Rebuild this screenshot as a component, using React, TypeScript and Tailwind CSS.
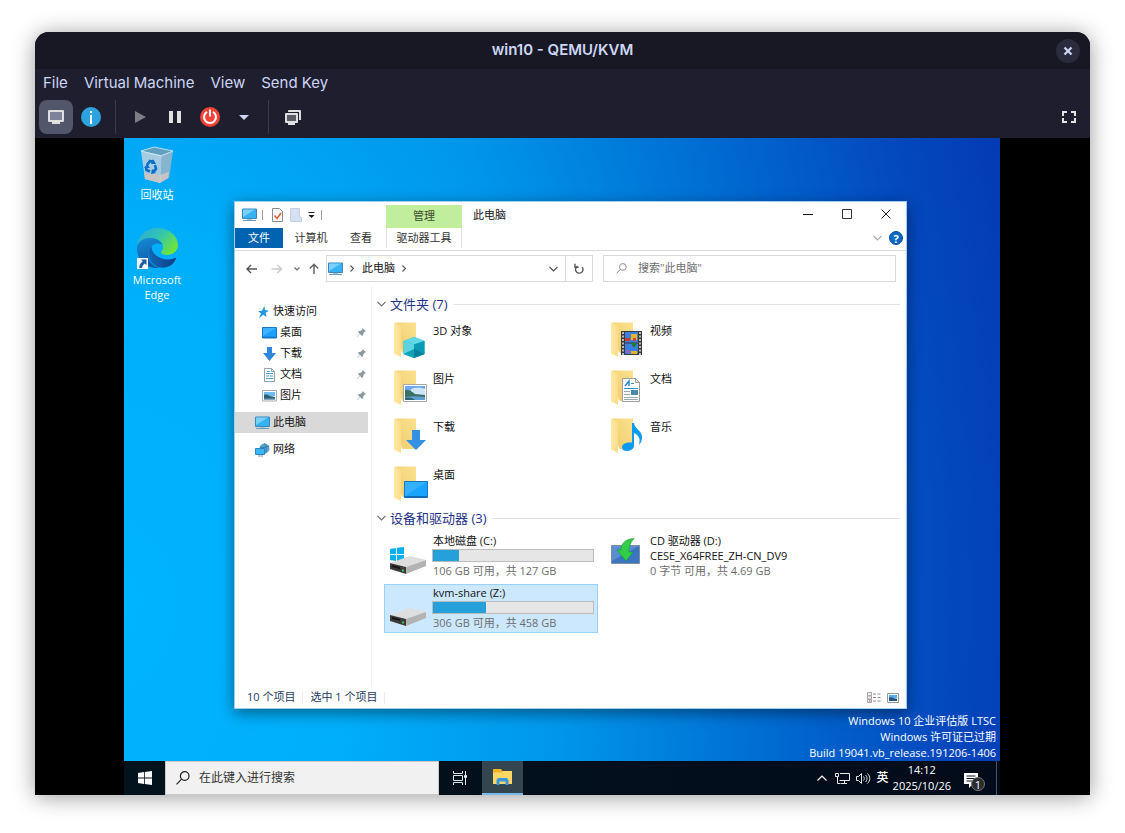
import type { ReactNode } from 'react'

type IconProps = { className?: string }

/* ---------- viewer icons ---------- */

function MonitorIcon() {
  return (
    <svg width="16" height="14" viewBox="0 0 16 14">
      <path d="M1 0h14a1 1 0 0 1 1 1v10a1 1 0 0 1-1 1h-3v2H4v-2H1a1 1 0 0 1-1-1V1a1 1 0 0 1 1-1z" fill="#dfdfdf" />
      <path d="M2 2h12v8H2z" fill="#80819a" />
    </svg>
  )
}

function InfoIcon() {
  return (
    <svg width="20" height="20" viewBox="0 0 20 20">
      <circle cx="10" cy="10" r="10" fill="#2fa1dc" />
      <path d="M9 4h2v2H9zM9 8h2v9H9z" fill="#fff" />
    </svg>
  )
}

function PowerIcon() {
  return (
    <svg width="20" height="20" viewBox="0 0 20 20">
      <circle cx="10" cy="10" r="10" fill="#f44336" />
      <path d="M7 4.800a6 6 0 1 0 6 0" fill="none" stroke="#fff" strokeWidth="2" />
      <path d="M10 2.500v7" stroke="#fff" strokeWidth="2" />
    </svg>
  )
}

function ScreensIcon() {
  return (
    <svg width="16" height="15" viewBox="0 0 16 15">
      <path d="M4 0h11a1 1 0 0 1 1 1v9h-2V2H3V1a1 1 0 0 1 1-1z" fill="#dfdfdf" />
      <path d="M1 3h11a1 1 0 0 1 1 1v8a1 1 0 0 1-1 1h-2v2H3v-2H1a1 1 0 0 1-1-1V4a1 1 0 0 1 1-1z" fill="#dfdfdf" />
      <path d="M2 5h9v6H2z" fill="#5c5c66" />
    </svg>
  )
}

function FullscreenIcon() {
  return (
    <svg width="14" height="12" viewBox="0 0 14 12" fill="none" stroke="#e4e4e4" strokeWidth="2">
      <path d="M1 5V1h4M9 1h4v4M13 7v4H9M5 11H1V7" />
    </svg>
  )
}

/* ---------- desktop icons ---------- */

function RecycleBin() {
  return (
    <svg width="34" height="38" viewBox="0 0 34 38">
      <path d="M1 5 14 1l19 4-12 5z" fill="#5f9fc0" />
      <path d="M1 5 21 9l-1 28-15-4z" fill="#a3cbe2" />
      <path d="m21 9 12-4-4 27-9 5z" fill="#86b4cf" />
      <path d="m4 27 16 2 9-3-1 6-8 5-15-4z" fill="#c8c3c4" />
      <path d="M1 5 14 1l19 4-12 5z" fill="none" stroke="#d9eef8" strokeWidth=".8" />
      <path d="M21 10 20 37" stroke="#c5dcea" strokeWidth=".6" />
      <g fill="none" stroke="#0c6dc6" strokeWidth="2.600">
        <path d="m7 19 3-4 4 1" />
        <path d="m15 19 1 4-3 3" />
        <path d="M10 25.500 6.500 24 6 21" />
      </g>
      <path d="m13 13 3 5-5 0zM16 27l-5 1 1-5zM4 22l3-4 3 4z" fill="#0c6dc6" />
    </svg>
  )
}

function EdgeIcon() {
  return (
    <svg width="42" height="42" viewBox="0 0 42 42">
      <defs>
        <linearGradient id="eg1" x1="0" y1="0" x2="1" y2="0.600">
          <stop offset="0" stopColor="#2aa8df" />
          <stop offset=".5" stopColor="#30c4b4" />
          <stop offset="1" stopColor="#6de33f" />
        </linearGradient>
        <linearGradient id="eg2" x1="0" y1="0" x2=".3" y2="1">
          <stop offset="0" stopColor="#178bd9" />
          <stop offset="1" stopColor="#0c59a4" />
        </linearGradient>
        <linearGradient id="eg3" x1="0" y1="0" x2="1" y2="0">
          <stop offset="0" stopColor="#1267b4" />
          <stop offset="1" stopColor="#0d3f86" />
        </linearGradient>
      </defs>
      <path d="M1 18C2 8 11 1 21 1c12 0 21 8 21 17 0 6-5 10-11 10-4 0-6-1-6-2.500 0-1 2-2.500 2-5.500 0-5-5-9-12-9C8 11 3 14 1 18z" fill="url(#eg1)" />
      <path d="M1 22C1 15 7 11 14 11c6 0 11 3 12.500 7-1-1-3-1.500-5-1.500C16 17 12 21 12 27c0 6 4 12 11 14-12 1-22-7-22-19z" fill="url(#eg2)" />
      <path d="M15.500 19C12 22 11 28 14 33c4 7 11 9 17 7 4-1 7-4 9-8 0-1-.5-1.500-1.500-1-3 1.500-7 2-11 1-7-2-12-6-12-13z" fill="url(#eg3)" />
    </svg>
  )
}

function ShortcutBadge() {
  return (
    <svg width="11" height="11" viewBox="0 0 11 11" className="block">
      <path d="M0 0h11v11H0z" fill="#f4f7fa" />
      <path d="M4 1.500h5.500V7L7.800 5.400C6 6.800 5.200 8 5 10H2.300C2 7 3.500 5 5.600 3.400z" fill="#1d5fa8" />
    </svg>
  )
}

/* ---------- explorer icons ---------- */

function PcIcon({ className }: IconProps) {
  return (
    <svg width="15" height="14" viewBox="0 0 15 14" className={className}>
      <path d="M.5 1h14v9.500H.5z" fill="#35b2f6" stroke="#3a87b8" strokeWidth="1" />
      <path d="M1 1.500h12L1 9z" fill="#79d0fb" />
      <path d="M5 11h5v1H5z" fill="#a9c4d3" />
      <path d="M1 12.500h13" stroke="#6b9cba" strokeWidth="1" />
    </svg>
  )
}

function StarIcon() {
  return (
    <svg width="11" height="12" viewBox="0 0 11 12" className="ml-[3px]">
      <path d="m6.500 0 .5 4 4 .8-3.500 2L8.500 11 5.300 8.800 1 12l2-4.500L0 5h3.800z" fill="#1f95e3" />
    </svg>
  )
}

function DesktopIcon() {
  return (
    <svg width="15" height="12" viewBox="0 0 15 12">
      <path d="M.5.500h14v10.500H.5z" fill="#1aa1fb" stroke="#1777c2" />
      <path d="M1 1h13L1 9z" fill="#3bb3ff" />
      <path d="M1 9.700h13v1H1z" fill="#0f6fbe" />
    </svg>
  )
}

function DownIcon() {
  return (
    <svg width="15" height="14" viewBox="0 0 15 14">
      <path d="M5 0h5v6h4l-6.500 8L1 6h4z" fill="#2f86dc" />
    </svg>
  )
}

function DocIcon() {
  return (
    <svg width="15" height="14" viewBox="0 0 15 14">
      <path d="M2.500.500h7l3 3v10h-10z" fill="#fafcfd" stroke="#93a3ad" />
      <path d="M9.500.500v3h3" fill="none" stroke="#93a3ad" />
      <path d="M4 5.500h7M4 8h3M8 8h3M4 10.500h7M5 3.500h3" stroke="#4aa5dc" />
    </svg>
  )
}

function PictureIcon() {
  return (
    <svg width="15" height="12" viewBox="0 0 15 12">
      <path d="M.5.500h14v10.500H.5z" fill="#fff" stroke="#a3adb3" />
      <path d="M2 2h11v4H2z" fill="#6ebcf1" />
      <path d="M2 5c2-1 4 0 6 1l5 1v2.500H2z" fill="#2a5f74" />
      <path d="M2 8.500h11v1H2z" fill="#6d9fc1" />
    </svg>
  )
}

function NetworkIcon() {
  return (
    <svg width="15" height="14" viewBox="0 0 15 14">
      <circle cx="9.500" cy="5.500" r="5" fill="#5fa4cc" />
      <path d="M9 .5c3 1 3 8 1 10M5 4c3 1 7 0 9-1" stroke="#2b7bb0" fill="none" />
      <path d="M.5 5.500h9v6h-9z" fill="#38b6f5" stroke="#2c86b9" />
      <path d="M3 13h5" stroke="#7899ac" />
    </svg>
  )
}

function PinIcon() {
  return (
    <svg width="9" height="9" viewBox="0 0 9 9">
      <path d="M5.500 0 9 3.300l-1.200.3-1.500 1.600-.2 2L5 8 3 6 .3 8.900 0 8.700 2.700 5.700 1 4l.8-1 2-.200 1.600-1.600z" fill="#8b989f" />
    </svg>
  )
}

function Folder({ children }: { children: ReactNode }) {
  return (
    <svg width="36" height="38" viewBox="0 0 36 38">
      <defs>
        <linearGradient id="fold" x1="0" y1="0" x2="1" y2="0">
          <stop offset="0" stopColor="#ffe9a6" />
          <stop offset="1" stopColor="#fbdc88" />
        </linearGradient>
        <linearGradient id="foldBack" x1="0" y1="1" x2="1" y2="0">
          <stop offset="0" stopColor="#f0cb6b" />
          <stop offset="1" stopColor="#fbe28f" />
        </linearGradient>
      </defs>
      <path d="M1 .5h21V31H8z" fill="url(#foldBack)" />
      <path d="M0 .5 7 4v31L0 31.500z" fill="url(#fold)" />
      <path d="M7 30.500h2v3.500H7z" fill="#fff" />
      {children}
    </svg>
  )
}

const cube = (
  <g>
    <path d="m20 15 10.500 4v13l-10.500 4-10.500-4V19z" fill="#1fb3c8" />
    <path d="m20 15 10.500 4L20 22.500 9.500 19z" fill="#61d8e6" />
    <path d="M9.500 19 20 22.500V36L9.500 32z" fill="#5ed3e0" />
    <path d="m20 22.500 10.500-3.500v13L20 36z" fill="#0a9ab4" />
    <path d="M9.500 32 20 27v9z" fill="#0fa2bb" />
    <path d="m20 27 10.500 5L20 36z" fill="#087f9a" />
  </g>
)

const video = (
  <g>
    <path d="M10 9h21v24H10z" fill="#38393c" />
    <path d="M14 10h13v10.500H14zM14 21.500h13v10.500H14z" fill="#3d7fe0" />
    <path d="M12 10v23M29 10v23" stroke="#e5e5e5" strokeWidth="1.500" strokeDasharray="2 1.500" />
    <path d="M20 12h6v6h-6zM20 29h6v3h-6z" fill="#e9b421" />
    <path d="M14 16h5v3h-5z" fill="#cf3a37" />
    <path d="M20 21h6l-2 4h-2z" fill="#247a33" />
    <path d="M22 16h3v3h-3z" fill="#d3442d" />
    <path d="M15 28h4v3h-4z" fill="#8d66c7" />
  </g>
)

const picture = (
  <g>
    <path d="M9.500 14.500h23v17h-23z" fill="#fff" stroke="#a4a9ad" />
    <path d="M11 16h20v9H11z" fill="#6fa8f0" />
    <path d="M17 19c5-2 10-1 14 0v6H17z" fill="#cfe6f7" />
    <path d="M11 20c4-1 7 2 10 4l10 1v2H11z" fill="#3a6f62" />
    <path d="M11 27c6-1 13-1 20 0v3H11z" fill="#5d9fd0" />
    <path d="M11 28c4-1 8 0 10 2H11z" fill="#2f6472" />
  </g>
)

const documentPage = (
  <g>
    <path d="M11.500 8.500h13l4 4v19h-17z" fill="#fdfdfd" stroke="#9d9d9d" />
    <path d="M24.500 8.500v4h4z" fill="#e1e1e1" stroke="#9d9d9d" />
    <path d="m14 16 4-5v5" fill="none" stroke="#1d86cf" strokeWidth="1.400" />
    <path d="M20 13.500h3M13 18.500h14" stroke="#2c8fd4" strokeWidth="1.200" />
    <path d="M13 21.500h6M13 24.500h6M13 27.500h14M13 29.500h14" stroke="#9aa7af" />
    <path d="M20 20h7v5h-7z" fill="#4b86ab" />
  </g>
)

const arrow = <path d="M18 12h8v10h6L22 32 12 22h6z" fill="#3490e3" />

const note = (
  <g fill="#0a9af0">
    <path d="M21 5h2c0 5 8 8 8 14 0 3-1 6-3 8 2-7-1-10-5-12v13c0 2-3 5-7 5-3 0-5-1-5-4s4-5 10-4.500z" />
  </g>
)

const screen = (
  <g>
    <path d="M10.500 15.500h23v16h-23z" fill="#18a3ff" stroke="#1277c7" />
    <path d="M11 16h22L11 30z" fill="#33b0ff" />
    <path d="M11 30h22v1.500H11z" fill="#0c69b5" />
  </g>
)

function DriveIcon({ windows }: { windows?: boolean }) {
  return (
    <svg width="38" height="30" viewBox="0 0 38 30">
      {windows && <path d="m1 4 6-1v6H1zM8 2.800 15 2v7H8zM1 10h6v6l-6-1zM8 10h7v7l-7-1z" fill="#0cb0ee" />}
      <path d="m1 18 20-7 16 4-20 7z" fill="#dedede" />
      <path d="m1 18 16 4v7L1 24z" fill="#3b3b3b" />
      <path d="m17 22 20-7v6l-20 8z" fill="#b3b3b3" />
      <path d="m3 20 8 2v2l-8-2z" fill="#171717" />
      <path d="M13 24.500h2v2h-2z" fill="#36d24a" />
    </svg>
  )
}

function CdIcon() {
  return (
    <svg width="30" height="28" viewBox="0 0 30 28">
      <path d="M.5 7.500h28v18H.5z" fill="#3a75c2" stroke="#7d8f9f" />
      <path d="M1 8h27L1 23z" fill="#5a8ed2" />
      <path d="M23 .5C15 1 10 5 10 12H6l9 11 7-9h-4c0-5 1-9 5-13.500z" fill="#30cf45" stroke="#17952b" strokeWidth=".6" />
    </svg>
  )
}

function Chevron({ className }: IconProps) {
  return (
    <svg width="9" height="6" viewBox="0 0 9 6" className={className} fill="none" stroke="currentColor" strokeWidth="1.200">
      <path d="m.5.800 4 4 4-4" />
    </svg>
  )
}

function ChevronRight() {
  return (
    <svg width="4" height="7" viewBox="0 0 4 7" fill="none" stroke="#5a5a5a" strokeWidth="1.200">
      <path d="m.5.500 3 3-3 3" />
    </svg>
  )
}

function SearchIcon({ size, color }: { size: number; color: string }) {
  return (
    <svg width={size} height={size} viewBox="0 0 14 14" fill="none" stroke={color} strokeWidth="1.200">
      <circle cx="8.700" cy="5" r="4.300" />
      <path d="M5.600 8.200.5 13.400" />
    </svg>
  )
}

/* ---------- data ---------- */

const quickLinks = [
  { label: '桌面', icon: <DesktopIcon /> },
  { label: '下载', icon: <DownIcon /> },
  { label: '文档', icon: <DocIcon /> },
  { label: '图片', icon: <PictureIcon /> },
]

const folders = [
  { label: '3D 对象', art: cube },
  { label: '视频', art: video },
  { label: '图片', art: picture },
  { label: '文档', art: documentPage },
  { label: '下载', art: arrow },
  { label: '音乐', art: note },
  { label: '桌面', art: screen },
]

/* ---------- explorer ---------- */

function GroupHeader({ title }: { title: string }) {
  return (
    <h2 className="flex h-5 items-center text-[13px] leading-5 text-[#1e3287]">
      <Chevron className="mr-1 ml-[5px] text-[#6d6d6d]" />
      {title}
      <span className="ml-1.5 h-px flex-1 bg-[#e2e2e2]" />
    </h2>
  )
}

type DriveProps = { name: string; free: string; used: number; selected?: boolean; windows?: boolean }

function Drive({ name, free, used, selected, windows }: DriveProps) {
  return (
    <button
      className={`flex h-[49px] w-[214px] border pr-[3px] text-left ${selected ? 'border-[#99d1ff] bg-[#cce8ff]' : 'border-transparent'}`}
    >
      <span className="w-[47px] shrink-0 pt-3 pl-1">
        <DriveIcon windows={windows} />
      </span>
      <span className="flex-1">
        <span className="block pl-px leading-[15px]">{name}</span>
        <span className="my-px block h-[13px] border border-[#bcbcbc] bg-[#e6e6e6]">
          <span className="block h-full bg-[#26a0da]" style={{ width: `${used}%` }} />
        </span>
        <span className="block pl-px leading-[15px] text-[#6d6d6d]">{free}</span>
      </span>
    </button>
  )
}

function Ribbon() {
  return (
    <header className="flex border-b border-[#dadbdc]">
      <div className="w-[151px]">
        <div className="flex h-[26px] items-center pl-[7px]">
          <PcIcon />
          <span className="ml-[5px] h-2.5 w-px bg-[#9f9f9f]" />
          <button aria-label="属性" className="ml-[9px]">
            <svg width="11" height="14" viewBox="0 0 11 14" className="block">
              <path d="M.5.500h7l3 3v10H.5z" fill="#f7f7f7" stroke="#8b8b8b" />
              <path d="m2.500 7.500 2.500 3 4-5.500" fill="none" stroke="#e3612f" strokeWidth="1.600" />
            </svg>
          </button>
          <button aria-label="新建文件夹" className="ml-[7px]">
            <svg width="12" height="14" viewBox="0 0 12 14" className="block">
              <path d="M.5.500h9v8l2 1v4H.5z" fill="#d5e1f2" stroke="#c3d0e4" />
            </svg>
          </button>
          <button aria-label="自定义快速访问工具栏" className="ml-[6px]">
            <svg width="7" height="7" viewBox="0 0 7 7" className="block">
              <path d="M.5 0h6v1h-6zM.5 3h6l-3 3z" fill="#1c1c1c" />
            </svg>
          </button>
          <span className="ml-[6px] h-2.5 w-px bg-[#9f9f9f]" />
        </div>
        <div className="flex h-5">
          <button className="w-12 bg-[#0063b1] text-white">文件</button>
          <button className="w-[56px] text-[#333]">计算机</button>
          <button className="w-[44px] text-[#333]">查看</button>
        </div>
      </div>
      <div className="flex w-[76px] flex-col pt-[3px]">
        <span className="flex h-[23px] items-center justify-center bg-[#c1ee9c] text-[#3a4a2f]">管理</span>
        <button className="h-5 border-x border-[#e1e1e1] text-[#333]">驱动器工具</button>
      </div>
      <h1 className="pl-[11px] leading-[26px]">此电脑</h1>
      <div className="ml-auto">
        <div className="flex h-6 pr-px">
          <button aria-label="最小化" className="flex w-[39px] items-center justify-center">
            <svg width="10" height="10" viewBox="0 0 10 10"><path d="M0 5.500h10" stroke="#111" /></svg>
          </button>
          <button aria-label="最大化" className="flex w-[39px] items-center justify-center">
            <svg width="10" height="10" viewBox="0 0 10 10"><path d="M.5.500h9v9h-9z" fill="none" stroke="#333" /></svg>
          </button>
          <button aria-label="关闭" className="flex w-[39px] items-center justify-center">
            <svg width="10" height="10" viewBox="0 0 10 10"><path d="m.5.500 9 9m0-9-9 9" stroke="#222" /></svg>
          </button>
        </div>
        <div className="flex h-6 items-center justify-end pr-[3px]">
          <button aria-label="展开功能区" className="mr-[7px] text-[#a8a8a8]"><Chevron /></button>
          <button aria-label="帮助" className="flex size-3.5 items-center justify-center rounded-full border border-[#0a4f96] bg-[#0b69c4] text-[11px] leading-none font-bold text-white">
            ?
          </button>
        </div>
      </div>
    </header>
  )
}

function AddressRow() {
  return (
    <div className="flex h-[35px] items-center pr-2.5 pl-[11px]">
      <button aria-label="后退" className="text-[#555]">
        <svg width="12" height="10" viewBox="0 0 12 10" fill="none" stroke="currentColor" strokeWidth="1.400" className="block"><path d="M11 5H1.200M5 1 1 5l4 4" /></svg>
      </button>
      <button aria-label="前进" className="ml-[13px] text-[#c9c9c9]">
        <svg width="12" height="10" viewBox="0 0 12 10" fill="none" stroke="currentColor" strokeWidth="1.400" className="block"><path d="M.5 5h10M6.500 1l4 4-4 4" /></svg>
      </button>
      <button aria-label="最近浏览的位置" className="ml-[11px] text-[#6d6d6d]">
        <svg width="6" height="4" viewBox="0 0 6 4" fill="none" stroke="currentColor" strokeWidth="1.200" className="block"><path d="m.5.500 2.500 2.500L5.500.500" /></svg>
      </button>
      <button aria-label="上移" className="ml-[9px] text-[#666]">
        <svg width="10" height="11" viewBox="0 0 10 11" fill="none" stroke="currentColor" strokeWidth="1.500" className="block"><path d="M5 11V1.500M.8 5.500 5 1.300l4.200 4.200" /></svg>
      </button>
      <div className="ml-[7px] flex h-[27px] min-w-0 flex-1 border border-[#d9d9d9]">
        <div className="flex flex-1 items-center pl-px">
          <PcIcon />
          <span className="mr-2 ml-[7px]"><ChevronRight /></span>
          <span>此电脑</span>
          <span className="ml-[7px]"><ChevronRight /></span>
          <button aria-label="上一个位置" className="mr-[7px] ml-auto text-[#444]"><Chevron /></button>
        </div>
        <button aria-label="刷新" className="flex w-[27px] items-center justify-center border-l border-[#d9d9d9]">
          <svg width="10" height="11" viewBox="0 0 10 11" fill="none" stroke="#555" strokeWidth="1.400"><path d="M8.200 4.200A3.700 3.700 0 1 1 3.500 3.200M1 .8v3.400h3.600" /></svg>
        </button>
      </div>
      <label className="ml-2.5 flex h-[27px] w-[293px] items-center border border-[#d9d9d9] pl-3">
        <SearchIcon size={11} color="#8b8b8b" />
        <input aria-label="搜索" placeholder={'搜索"此电脑"'} className="ml-[11px] min-w-0 flex-1 outline-none placeholder:text-[#6d6d6d]" />
      </label>
    </div>
  )
}

function Explorer() {
  return (
    <section className="flex min-w-0 flex-1 flex-col border border-[#9bd0f0] bg-white text-[11px] text-[#111] shadow-[0_4px_14px_rgba(0,0,0,0.45)]">
      <Ribbon />
      <AddressRow />
      <div className="flex flex-1">
        <nav className="w-[137px] shrink-0 border-r border-[#f0f0f0] pr-[3px] pt-[15px]">
          <a href="#" className="flex h-[21px] items-center pl-5">
            <span className="w-[18px]"><StarIcon /></span>
            快速访问
          </a>
          {quickLinks.map((l) => (
            <a key={l.label} href="#" className="flex h-[21px] items-center pr-0.5 pl-[27px]">
              <span className="w-[18px]">{l.icon}</span>
              <span className="flex-1">{l.label}</span>
              <PinIcon />
            </a>
          ))}
          <a href="#" className="mt-1.5 flex h-[21px] items-center bg-[#d9d9d9] pl-5">
            <span className="w-[18px]"><PcIcon /></span>
            此电脑
          </a>
          <a href="#" className="mt-1.5 flex h-[21px] items-center pl-5">
            <span className="w-[18px]"><NetworkIcon /></span>
            网络
          </a>
        </nav>
        <main className="flex-1 pt-2 pr-1.5">
          <GroupHeader title="文件夹 (7)" />
          <div className="grid grid-cols-[217px_217px] pt-0.5 pl-3">
            {folders.map((f) => (
              <button key={f.label} className="flex h-12 items-start pt-1.5 pl-[10px] text-left">
                <Folder>{f.art}</Folder>
                <span className="pl-[3px] leading-[18px]">{f.label}</span>
              </button>
            ))}
          </div>
          <GroupHeader title="设备和驱动器 (3)" />
          <div className="grid grid-cols-[217px_217px] gap-y-[3px] pt-1 pl-3">
            <Drive name="本地磁盘 (C:)" free="106 GB 可用，共 127 GB" used={16} windows />
            <button className="flex h-[49px] pt-px pl-[10px] text-left">
              <span className="w-[39px] pt-[5px]"><CdIcon /></span>
              <span className="leading-[15px] whitespace-nowrap">
                CD 驱动器 (D:)
                <br />
                CESE_X64FREE_ZH-CN_DV9
                <br />
                <span className="text-[#6d6d6d]">0 字节 可用，共 4.69 GB</span>
              </span>
            </button>
            <Drive name="kvm-share (Z:)" free="306 GB 可用，共 458 GB" used={33} selected />
          </div>
        </main>
      </div>
      <footer className="flex h-[21px] items-center pr-[7px] pl-3 text-[#1e3a5c]">
        <span>10 个项目</span>
        <span className="mx-[7px] h-3 w-px bg-[#ececec]" />
        <span>选中 1 个项目</span>
        <span className="mx-[7px] h-3 w-px bg-[#ececec]" />
        <button aria-label="详细信息" className="ml-auto">
          <svg width="14" height="11" viewBox="0 0 14 11" className="block">
            <path d="M.5.500h4v3h-4zM.5 4h4v3h-4zM.5 7.500h4v3h-4z" fill="#f4f4f4" stroke="#a5a5a5" />
            <path d="M6 2h3M10.500 2h3M6 5.500h3M10.500 5.500h3M6 9h3M10.500 9h3" stroke="#8a8a8a" />
            <path d="M2 8.500h1.500v1H2z" fill="#c33" />
          </svg>
        </button>
        <button aria-label="大缩略图" className="ml-[6px]">
          <svg width="12" height="10" viewBox="0 0 12 10" className="block">
            <path d="M.5.500h11v9H.5z" fill="#fff" stroke="#8f9aa3" />
            <path d="M2 2h8v3H2z" fill="#5aaef0" />
            <path d="M2 4.500c3-1 5 1 8 1.200V8H2z" fill="#28577b" />
          </svg>
        </button>
      </footer>
    </section>
  )
}

/* ---------- taskbar ---------- */

function Taskbar() {
  return (
    <footer className="flex h-[34px] bg-gradient-to-r from-[#02131d] to-[#020b1a] text-[11px] text-white">
      <button aria-label="开始" className="flex w-[41px] items-center justify-center">
        <svg width="14" height="14" viewBox="0 0 14 14" fill="#fff">
          <path d="m0 2 6-.9v5.500H0zM6.800 1 14 0v6.600H6.800zM0 7.400h6v5.500L0 12zM6.800 7.400H14V14l-7.200-1z" />
        </svg>
      </button>
      <label className="flex w-[274px] items-center border border-[#c9c9c9] bg-[#f1f1f1] pl-2.5 text-[12px]">
        <SearchIcon size={14} color="#222" />
        <input aria-label="搜索" placeholder="在此键入进行搜索" className="ml-[9px] min-w-0 flex-1 outline-none placeholder:text-[#333]" />
      </label>
      <button aria-label="任务视图" className="flex w-[43px] items-center justify-center">
        <svg width="15" height="14" viewBox="0 0 15 14" fill="none" stroke="#dfe3e6">
          <path d="M.5 0v2.500h9V0M.5 14v-2.500h9V14M.5 4.500h9v5h-9zM12.500 0v4M12.500 7v7" />
          <path d="M11.500 4.500h2v2h-2z" fill="#fff" />
        </svg>
      </button>
      <button aria-label="文件资源管理器" className="flex w-[41px] items-center justify-center border-b-2 border-[#76b9ed] bg-[#33454f]">
        <svg width="19" height="16" viewBox="0 0 19 16">
          <path d="M0 0h8l1.500 2H19v13H0z" fill="#f0b323" />
          <path d="M0 3.500h8L9.500 2H19v13H0z" fill="#fdd663" />
          <path d="M3.500 11 5 9h9l1.500 2v5h-3v-3.500h-6V16h-3z" fill="#3a96dd" />
        </svg>
      </button>
      <div className="ml-auto flex items-center">
        <button aria-label="显示隐藏的图标">
          <svg width="10" height="6" viewBox="0 0 10 6" fill="none" stroke="#fff" strokeWidth="1.200"><path d="m.5 5.500 4.500-4.500 4.500 4.500" /></svg>
        </button>
        <svg width="15" height="13" viewBox="0 0 15 13" fill="none" stroke="#e8e8e8" className="ml-[8px]">
          <path d="M5 1.500h9.500v7h-10M.5 1.500h3v3h-3zM2.500 4.500v7h3M9.500 8.500v3M6 11.500h6" />
        </svg>
        <svg width="15" height="13" viewBox="0 0 15 13" fill="none" stroke="#e8e8e8" className="ml-[6px]">
          <path d="M.5 4.500h2l3-3v10l-3-3h-2zM7.500 4.500c1 1 1 3 0 4M9.500 3c2 2 2 5 0 7M11.500 1.500c3 3 3 7 0 10" />
        </svg>
        <span className="ml-[6px] text-[12px] font-medium">英</span>
        <time className="ml-1 text-center text-[11px] leading-4">
          14:12
          <br />
          2025/10/26
        </time>
        <button aria-label="通知" className="relative ml-[13px] h-[26px] w-[21px]">
          <svg width="15" height="15" viewBox="0 0 15 15" className="mt-1 block">
            <path d="M0 0h14v11H9l-4 4v-4H0z" fill="#fff" />
            <path d="M2.500 3h9M2.500 5.500h9M2.500 8h6" stroke="#0b1520" />
          </svg>
          <span className="absolute right-0 bottom-0 flex size-3.5 items-center justify-center rounded-full border border-[#777] bg-[#2a2c30] text-[11px] leading-none">1</span>
        </button>
        <span className="mr-[3px] ml-[11px] h-[34px] w-px bg-[#4a5560]" />
      </div>
    </footer>
  )
}

/* ---------- page ---------- */

const menus = ['File', 'Virtual Machine', 'View', 'Send Key']

export default function App() {
  return (
    <div className="flex min-h-screen flex-col bg-white px-[35px] pt-8 pb-[38px] font-['Inter',sans-serif]">
      <div className="flex flex-1 flex-col overflow-hidden rounded-t-[14px] bg-[#1e1e2e] shadow-[0_2px_22px_rgba(0,0,0,0.4)]">
        <div className="relative flex h-[37px] items-center justify-center bg-[#181825] text-[15px] font-semibold text-[#cdd6f4]">
          win10 - QEMU/KVM
          <button aria-label="Close" className="absolute right-2.5 flex size-6 items-center justify-center rounded-full bg-[#2a2b3c]">
            <svg width="10" height="10" viewBox="0 0 10 10"><path d="m1.500 1.500 7 7m0-7-7 7" stroke="#cdd6f4" strokeWidth="2.200" /></svg>
          </button>
        </div>
        <nav className="flex h-7 items-center gap-4 px-2 text-[15px] text-[#cdd6f4]">
          {menus.map((m) => (
            <button key={m}>{m}</button>
          ))}
        </nav>
        <div className="flex h-[41px] items-start px-1 pt-[3px]">
          <div className="flex h-[34px] items-center">
            <button aria-label="Console" className="flex size-[34px] items-center justify-center rounded-lg bg-[#53556b]"><MonitorIcon /></button>
            <button aria-label="Details" className="ml-2"><InfoIcon /></button>
            <span className="ml-[14px] h-[34px] w-px bg-[#3a3a4a]" />
            <button aria-label="Run" className="ml-[19px]">
              <svg width="11" height="12" viewBox="0 0 11 12"><path d="m0 0 11 6-11 6z" fill="#7d7e85" /></svg>
            </button>
            <button aria-label="Pause" className="ml-[23px]">
              <svg width="12" height="12" viewBox="0 0 12 12"><path d="M0 0h4v12H0zM8 0h4v12H8z" fill="#e0e0e0" /></svg>
            </button>
            <button aria-label="Shut Down" className="ml-[19px]"><PowerIcon /></button>
            <button aria-label="Shut Down menu" className="ml-[19px]">
              <svg width="10" height="5" viewBox="0 0 10 5"><path d="M0 0h10L5 5z" fill="#cdd6f4" /></svg>
            </button>
            <span className="ml-[19px] h-[34px] w-px bg-[#3a3a4a]" />
            <button aria-label="Snapshots" className="ml-4"><ScreensIcon /></button>
          </div>
          <button aria-label="Fullscreen" className="mr-[10px] ml-auto flex h-[34px] items-center"><FullscreenIcon /></button>
        </div>
        <div className="flex flex-1 bg-black pr-[90px] pl-[89px] font-['Open_Sans','Noto_Sans_CJK_SC',sans-serif]">
          <div className="flex flex-1 flex-col">
            <div className="relative flex flex-1 bg-[radial-gradient(ellipse_106%_240%_at_0%_75%,#00b4ff_0%,#00aef9_25%,#0096ea_48%,#0068d0_72%,#0449be_88%,#033ab4_100%)] pt-[63px] pr-[93px] pb-[52px] pl-[110px]">
              <div className="absolute top-2 left-0.5 w-[62px] text-center text-[11px] leading-[15px] text-white [text-shadow:0_1px_2px_#000,1px_1px_1px_#000]">
                <button className="flex w-full flex-col items-center">
                  <RecycleBin />
                  <span className="mt-[3px]">回收站</span>
                </button>
                <button className="relative mt-[25px] flex w-full flex-col items-center">
                  <EdgeIcon />
                  <span className="absolute top-[31px] left-[11px]"><ShortcutBadge /></span>
                  <span className="mt-[3px]">Microsoft<br />Edge</span>
                </button>
              </div>
              <Explorer />
              <p className="absolute right-1 bottom-0 text-right text-[11px] leading-4 text-white">
                Windows 10 企业评估版 LTSC
                <br />
                Windows 许可证已过期
                <br />
                Build 19041.vb_release.191206-1406
              </p>
            </div>
            <Taskbar />
          </div>
        </div>
      </div>
    </div>
  )
}
